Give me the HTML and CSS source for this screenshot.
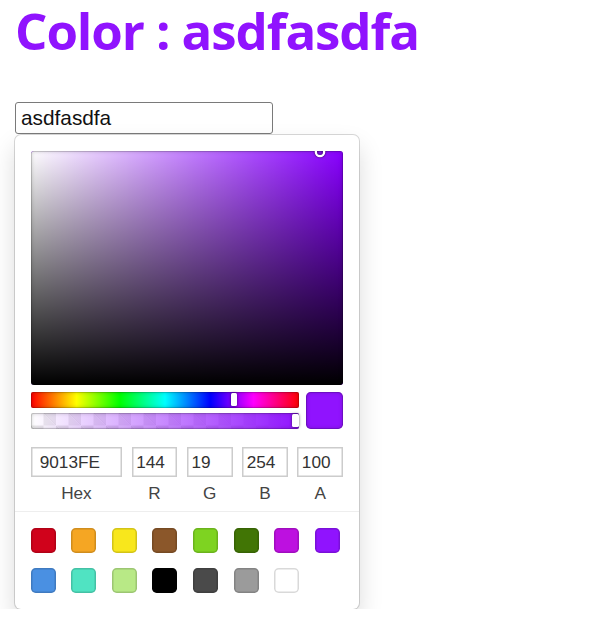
FILE: index.html
```html
<!DOCTYPE html>
<html>
<head>
<meta charset="utf-8">
<link rel="stylesheet" href="styles.css">
</head>
<body>
<div class="page">
  <h1 class="title">Color : asdfasdfa</h1>
  <input class="name-input" type="text" value="asdfasdfa">
  <div class="picker">
    <div class="saturation">
      <div class="sat-white"></div>
      <div class="sat-black"></div>
      <div class="sat-pointer" style="left: 92.5%; top: 0.4%;"></div>
    </div>
    <div class="controls">
      <div class="sliders">
        <div class="hue">
          <div class="slider-pointer" style="left: 75.5%;"></div>
        </div>
        <div class="alpha">
          <div class="alpha-gradient"></div>
          <div class="slider-pointer alpha-pointer" style="left: 100%;"></div>
        </div>
      </div>
      <div class="active-color"></div>
    </div>
    <div class="fields">
      <div class="field field-hex">
        <input class="field-input" type="text" value="9013FE">
        <span class="field-label">Hex</span>
      </div>
      <div class="field">
        <input class="field-input" type="text" value="144">
        <span class="field-label">R</span>
      </div>
      <div class="field">
        <input class="field-input" type="text" value="19">
        <span class="field-label">G</span>
      </div>
      <div class="field">
        <input class="field-input" type="text" value="254">
        <span class="field-label">B</span>
      </div>
      <div class="field">
        <input class="field-input" type="text" value="100">
        <span class="field-label">A</span>
      </div>
    </div>
    <div class="swatches">
      <div class="swatch" style="background:#D0021B"></div>
      <div class="swatch" style="background:#F5A623"></div>
      <div class="swatch" style="background:#F8E71C"></div>
      <div class="swatch" style="background:#8B572A"></div>
      <div class="swatch" style="background:#7ED321"></div>
      <div class="swatch" style="background:#417505"></div>
      <div class="swatch" style="background:#BD10E0"></div>
      <div class="swatch" style="background:#9013FE"></div>
      <div class="swatch" style="background:#4A90E2"></div>
      <div class="swatch" style="background:#50E3C2"></div>
      <div class="swatch" style="background:#B8E986"></div>
      <div class="swatch" style="background:#000000"></div>
      <div class="swatch" style="background:#4A4A4A"></div>
      <div class="swatch" style="background:#9B9B9B"></div>
      <div class="swatch" style="background:#FFFFFF"></div>
    </div>
  </div>
</div>
</body>
</html>
```
FILE: styles.css
```css
html, body {
  margin: 0;
  padding: 0;
  background: #fff;
}

.page {
  padding: 0 0 0 15px;
  display: flex;
  flex-direction: column;
  align-items: flex-start;
}

.title {
  margin: 0;
  font-family: "Open Sans", "Noto Sans", sans-serif;
  font-weight: 700;
  font-size: 51px;
  line-height: 60px;
  letter-spacing: -1.1px;
  color: #9013FE;
}

.name-input {
  margin: 42px 0 0 0;
  box-sizing: border-box;
  width: 258px;
  height: 32px;
  padding: 0 5px;
  border: 1.5px solid #7a7a7a;
  border-radius: 3px;
  font-family: "Liberation Sans", Arial, sans-serif;
  font-size: 20.8px;
  color: #111;
  outline: none;
}

.picker {
  margin-top: 1px;
  width: 312.5px;
  padding: 15.6px 15.6px 0;
  background: #fff;
  border-radius: 6px;
  box-shadow: rgba(0,0,0,.15) 0 0 0 1px, rgba(0,0,0,.15) 0 12.5px 25px;
}

.saturation {
  position: relative;
  width: 100%;
  height: 234px;
  overflow: hidden;
  border-radius: 3px;
  background: rgb(136, 0, 255);
}

.sat-white {
  position: absolute;
  inset: 0;
  background: linear-gradient(to right, #fff, rgba(255,255,255,0));
}

.sat-black {
  position: absolute;
  inset: 0;
  background: linear-gradient(to top, #000, rgba(0,0,0,0));
  box-shadow: inset 0 0 0 1px rgba(0,0,0,.15), inset 0 0 4px rgba(0,0,0,.25);
}

.sat-pointer {
  position: absolute;
  width: 6.25px;
  height: 6.25px;
  border-radius: 50%;
  box-shadow: 0 0 0 2.3px #fff, inset 0 0 1.5px 1.5px rgba(0,0,0,.3), 0 0 1.5px 3px rgba(0,0,0,.4);
  transform: translate(-3px, -3px);
}

.controls {
  display: flex;
  padding-top: 7px;
}

.sliders {
  flex: 1;
  display: flex;
  flex-direction: column;
  gap: 5px;
}

.hue {
  position: relative;
  height: 16px;
  border-radius: 2px;
  background: linear-gradient(to right, #f00 0%, #ff0 17%, #0f0 33%, #0ff 50%, #00f 67%, #f0f 83%, #f00 100%);
  box-shadow: inset 0 0 0 1px rgba(0,0,0,.15), inset 0 0 4px rgba(0,0,0,.25);
}

.alpha {
  position: relative;
  height: 16px;
  border-radius: 2px;
  background-color: #fff;
  background-image:
    linear-gradient(45deg, rgba(0,0,0,.08) 25%, transparent 25%, transparent 75%, rgba(0,0,0,.08) 75%),
    linear-gradient(45deg, rgba(0,0,0,.08) 25%, transparent 25%, transparent 75%, rgba(0,0,0,.08) 75%);
  background-size: 25px 25px;
  background-position: 0 0, 12.5px 12.5px;
}

.alpha-gradient {
  position: absolute;
  inset: 0;
  border-radius: 2px;
  background: linear-gradient(to right, rgba(144,19,254,0), rgba(144,19,254,1));
  box-shadow: inset 0 0 0 1px rgba(0,0,0,.15), inset 0 0 4px rgba(0,0,0,.25);
}

.slider-pointer {
  position: absolute;
  top: 1.6px;
  width: 6.25px;
  height: 12.5px;
  border-radius: 1.5px;
  background: #fff;
  box-shadow: 0 0 3px rgba(0,0,0,.6);
  transform: translateX(-3px);
}

.alpha-pointer {
  transform: translateX(-7px);
}

.active-color {
  width: 37.5px;
  height: 37.5px;
  margin-left: 6.25px;
  border-radius: 4.7px;
  background: #9013FE;
  box-shadow: inset 0 0 0 1px rgba(0,0,0,.15), inset 0 0 4px rgba(0,0,0,.25);
}

.fields {
  display: flex;
  padding-top: 18px;
}

.field {
  flex: 1 1 0%;
  padding-left: 9.4px;
  display: flex;
  flex-direction: column;
}

.field-hex {
  flex: 2 1 0%;
  padding-left: 0;
}

.field-input {
  box-sizing: border-box;
  width: 100%;
  margin: 0;
  padding: 5px 0 4px 10%;
  height: 30px;
  border: none;
  box-shadow: inset 0 0 0 1.5px #ccc;
  font-family: "Liberation Sans", Arial, sans-serif;
  font-size: 17.2px;
  color: #333;
  outline: none;
}

.field-label {
  display: block;
  text-align: center;
  font-family: "Liberation Sans", Arial, sans-serif;
  font-size: 17.2px;
  color: #444;
  padding-top: 6px;
  padding-bottom: 7px;
}

.swatches {
  display: flex;
  flex-wrap: wrap;
  margin: 0 -15.6px;
  padding: 15.6px 0 0 15.6px;
  border-top: 1px solid #eee;
}

.swatch {
  width: 25px;
  height: 25px;
  margin: 0 15.6px 15.6px 0;
  border-radius: 4.7px;
  box-shadow: inset 0 0 0 1.5px rgba(0,0,0,.15);
}
```
